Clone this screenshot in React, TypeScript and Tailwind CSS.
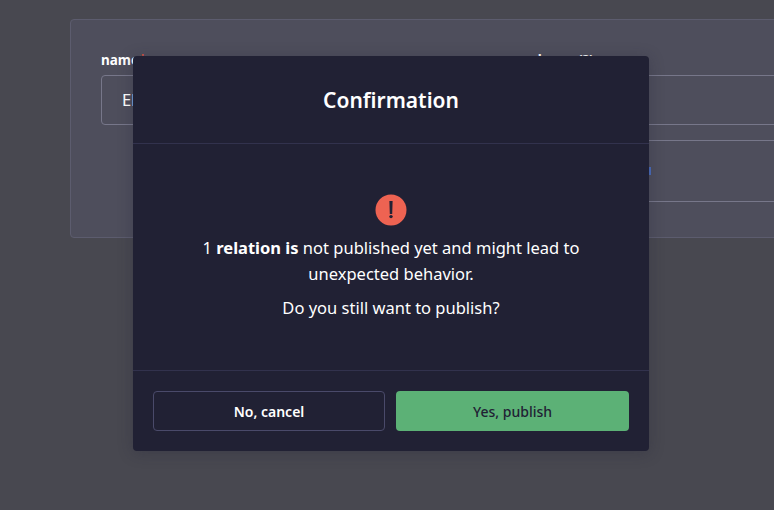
export default function App() {
  return (
    <div className="relative h-[510px] w-[774px] overflow-hidden bg-[#484850] font-['Noto_Sans','Open_Sans',sans-serif]">
      {/* page behind the overlay */}
      <div className="ml-[70px] pt-[19px]">
        <div className="grid h-[219px] w-[800px] grid-cols-[414px_1fr] gap-x-[16px] rounded-l-[4px] border border-[#5c5c6e] bg-[#4e4e5c] pl-[30px] pt-[31px]">
          <div>
            <label className="block h-[24px] text-[13.5px] leading-[18px] font-bold text-white">
              name<span className="text-[#d9523f]">*</span>
            </label>
            <div className="flex h-[50px] items-center rounded-[4px] border border-[#77778a] pl-[20px] text-[16.5px] text-white">
              Elit
            </div>
          </div>
          <div>
            <label className="flex h-[24px] gap-[19px] text-[13.5px] leading-[18px] font-bold text-white">
              <span>slug</span>
              <span>(?)</span>
            </label>
            <div className="h-[50px] border border-r-0 border-[#77778a]" />
            <div className="mt-[15px] flex h-[62px] items-center border border-r-0 border-[#77778a] pl-[117px]">
              <span className="h-[8px] w-[2px] bg-[#4a6dbd]" />
            </div>
          </div>
        </div>
      </div>

      {/* confirmation dialog */}
      <div className="absolute left-[133px] top-[56px] flex h-[395px] w-[516px] flex-col rounded-[4px] bg-[#212134] text-white shadow-[0_2px_15px_rgba(33,33,52,0.3)]">
        <header className="flex h-[88px] shrink-0 items-center justify-center border-b border-[#32324d]">
          <h2 className="text-[21px] leading-[28px] font-semibold">Confirmation</h2>
        </header>
        <div className="flex flex-1 flex-col items-center pt-[50px] text-center text-[16.5px] leading-[26px]">
          <svg width="32" height="32" viewBox="0 0 32 32" aria-hidden="true">
            <circle cx="16" cy="16" r="15.5" fill="#ee6352" />
            <path d="M14.4 7h3.2l-.4 13h-2.4z" fill="#212134" />
            <circle cx="16" cy="22.6" r="1.7" fill="#212134" />
          </svg>
          <p className="mt-[9px] w-[400px]">
            1 <strong className="font-bold">relation is</strong> not published yet and might lead to unexpected behavior.
          </p>
          <p className="mt-[8px]">Do you still want to publish?</p>
        </div>
        <footer className="flex h-[81px] shrink-0 gap-[11px] border-t border-[#32324d] px-[20px] pt-[20px]">
          <button className="h-[40px] w-[232px] rounded-[4px] border border-[#4a4a6a] text-[14px] font-semibold text-white">
            No, cancel
          </button>
          <button className="h-[40px] w-[233px] rounded-[4px] bg-[#5cb176] text-[14px] font-medium text-[#212134]">
            Yes, publish
          </button>
        </footer>
      </div>
    </div>
  );
}
